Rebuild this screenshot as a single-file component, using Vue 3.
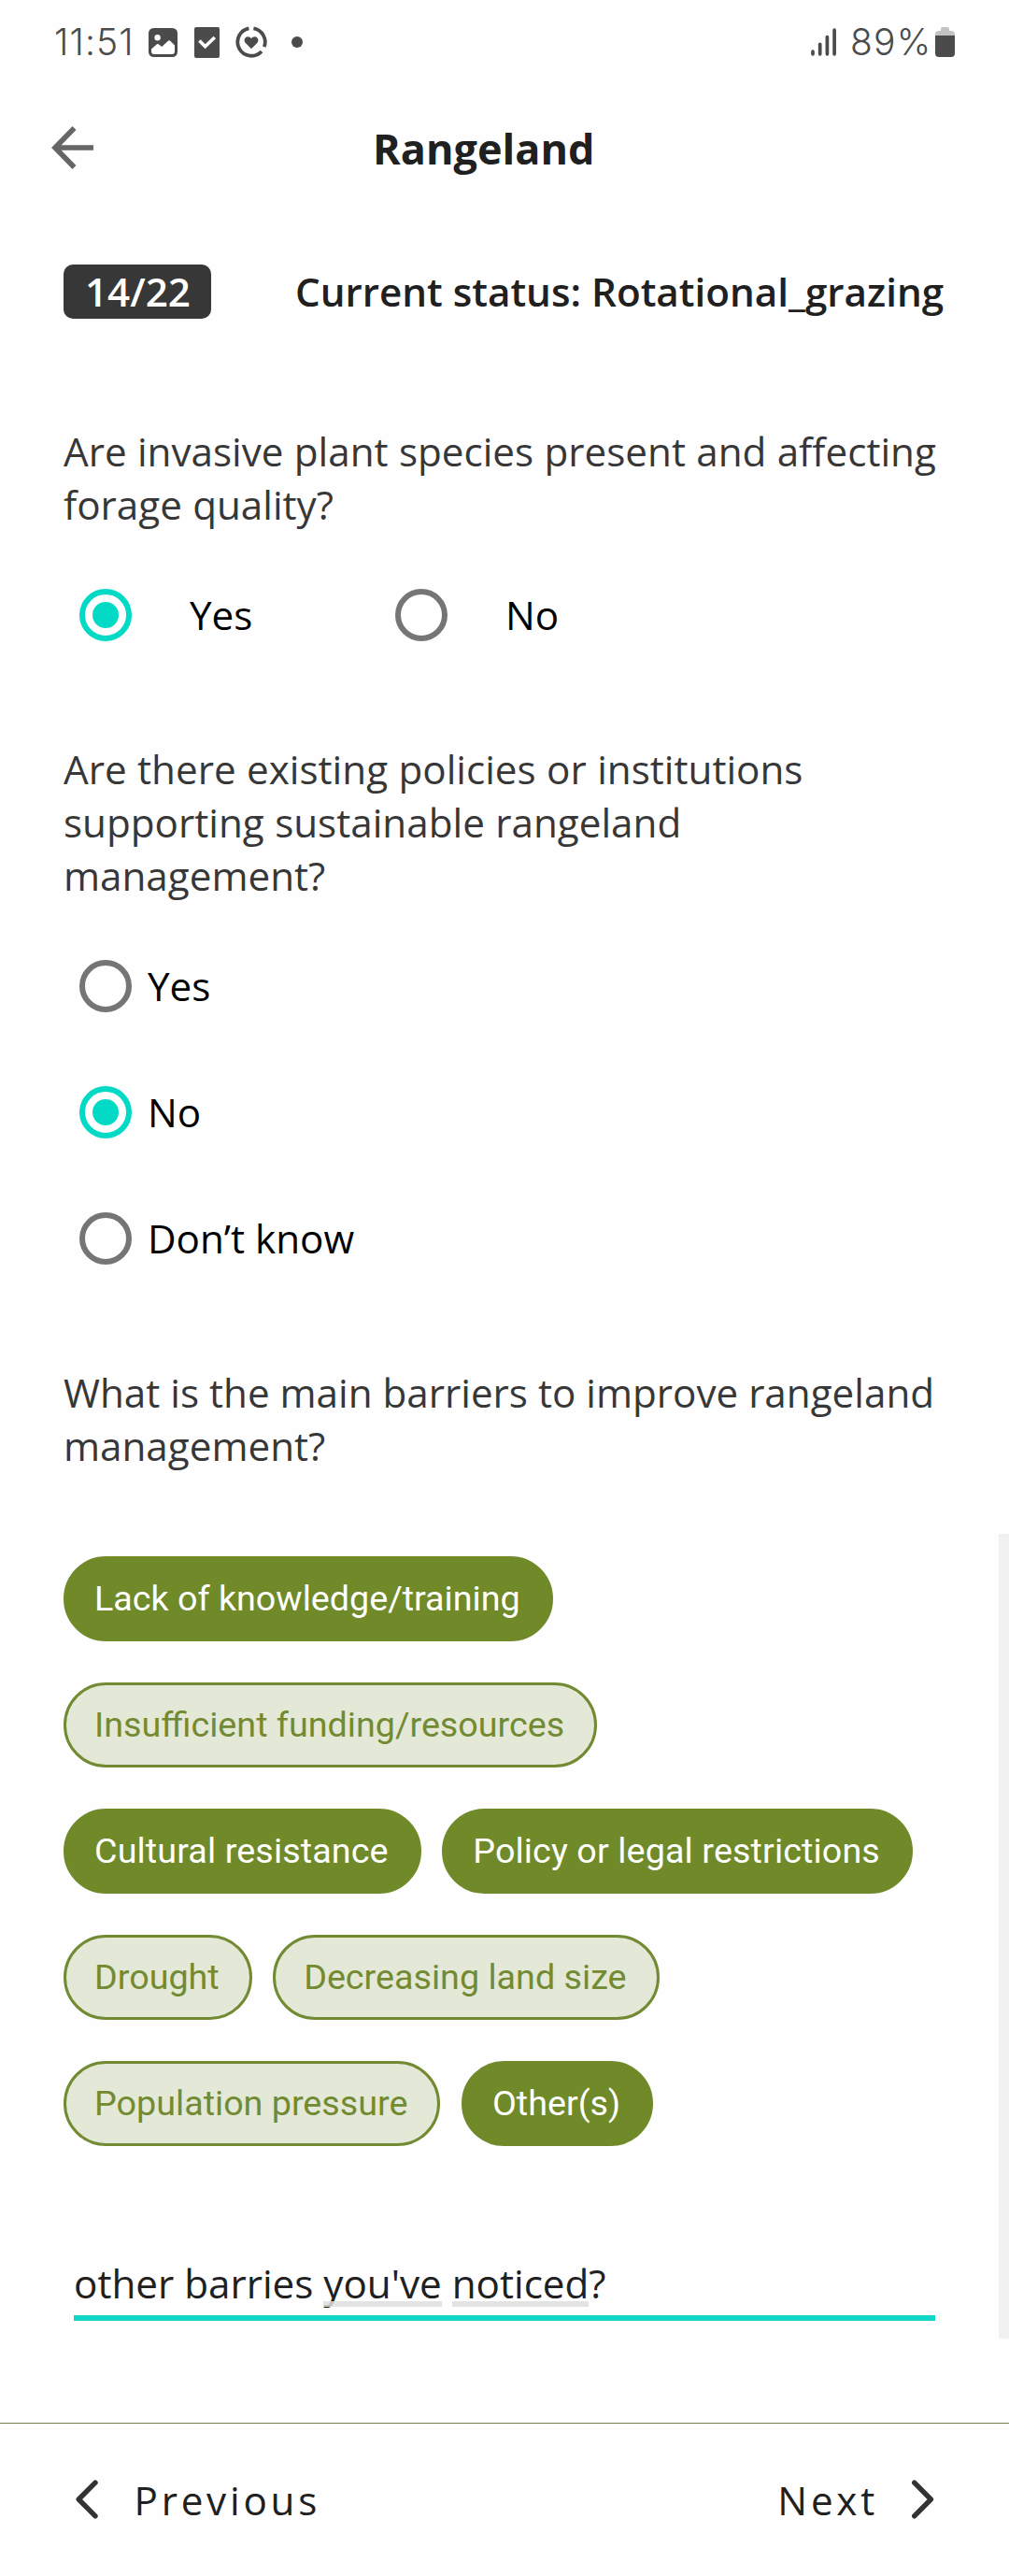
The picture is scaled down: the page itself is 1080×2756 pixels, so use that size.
<script setup>
import { ref } from 'vue'

const invasive = ref('Yes')
const policies = ref('No')
const policyOptions = ['Yes', 'No', 'Don’t know']

const barrierRows = ref([
  [{ label: 'Lack of knowledge/training', on: true }],
  [{ label: 'Insufficient funding/resources', on: false }],
  [
    { label: 'Cultural resistance', on: true, wide: true },
    { label: 'Policy or legal restrictions', on: true, wide: true },
  ],
  [
    { label: 'Drought', on: false },
    { label: 'Decreasing land size', on: false },
  ],
  [
    { label: 'Population pressure', on: false },
    { label: 'Other(s)', on: true },
  ],
])
</script>

<template>
  <div class="screen">
    <div class="status-bar">
      <span class="clock">11:51</span>
      <svg class="ic-image" width="31" height="31" viewBox="0 0 31 31">
        <rect width="31" height="31" rx="5.5" fill="#4b4b4b" />
        <circle cx="9.6" cy="10.2" r="3.2" fill="#fefefe" />
        <path d="M3 22.5 L9 17.2 Q10 16.6 11 17.4 L14.2 20 L21.2 13.6 Q22.2 12.8 23.2 13.8 L28 18.5 V25 Q28 28 25 28 H6 Q3 28 3 25 Z" fill="#fefefe" />
      </svg>
      <svg class="ic-task" width="27" height="33" viewBox="0 0 27 33">
        <rect width="27" height="33" rx="2" fill="#4b4b4b" />
        <path d="M5.4 14.6 L11.6 20.8 L21.8 11" fill="none" stroke="#fefefe" stroke-width="3.6" />
      </svg>
      <svg class="ic-heart" width="34" height="34" viewBox="0 0 34 34">
        <g fill="none" stroke="#4b4b4b" stroke-width="3.8">
          <path d="M14.4 2.4 A14.8 14.8 0 1 0 28 27" />
          <path d="M19.4 2.4 A14.8 14.8 0 0 1 30.8 22.2" />
        </g>
        <path d="M17 24.2 L10.8 17.9 C8.4 15.2 10 11.2 13.2 11.2 C15 11.2 16.3 12.1 17 13.3 C17.7 12.1 19 11.2 20.8 11.2 C24 11.2 25.6 15.2 23.2 17.9 Z" fill="#4b4b4b" />
      </svg>
      <i class="dot"></i>
      <svg class="ic-signal" width="28" height="30" viewBox="0 0 28 30">
        <g stroke="#4b4b4b" stroke-width="3.7" stroke-linecap="round">
          <path d="M2 25.2V27.8M9.7 17.3V27.8M17.4 9.5V27.8M25.1 2.2V27.8" />
        </g>
      </svg>
      <span class="percent">89%</span>
      <svg class="ic-battery" width="21" height="32" viewBox="0 0 21 32">
        <path d="M6 2 Q6 0 8 0 H13 Q15 0 15 2 V4 H18 Q21 4.5 21 8 V12 H0 V8 Q0 4.5 3 4 H6 Z" fill="#c3c3c3" />
        <path d="M0 9 H21 V28 Q21 32 17 32 H4 Q0 32 0 28 Z" fill="#4b4b4b" />
      </svg>
    </div>

    <header class="app-bar">
      <svg class="back" width="46" height="46" viewBox="0 0 46 46">
        <path d="M45 23 H5 M24.5 2 L4 23 L24.5 44" fill="none" stroke="#666" stroke-width="5.6" />
      </svg>
      <h1>Rangeland</h1>
    </header>

    <main class="content">
      <div class="progress">
        <span class="badge">14/22</span>
        <span class="current">Current status: Rotational_grazing</span>
      </div>

      <p class="question q1">Are invasive plant species present and affecting<br />forage quality?</p>
      <div class="inline-options">
        <label v-for="o in ['Yes', 'No']" :key="o" @click="invasive = o">
          <i class="radio" :class="{ on: invasive === o }"></i>
          <span>{{ o }}</span>
        </label>
      </div>

      <p class="question q2">Are there existing policies or institutions<br />supporting sustainable rangeland<br />management?</p>
      <div class="stacked-options">
        <label v-for="o in policyOptions" :key="o" @click="policies = o">
          <i class="radio" :class="{ on: policies === o }"></i>
          <span>{{ o }}</span>
        </label>
      </div>

      <p class="question q3">What is the main barriers to improve rangeland<br />management?</p>
      <div class="chips">
        <div v-for="(row, i) in barrierRows" :key="i" class="chip-row">
          <span v-for="c in row" :key="c.label" class="chip" :class="{ on: c.on, wide: c.wide }" @click="c.on = !c.on">{{ c.label }}</span>
        </div>
      </div>

      <div class="field">other barries <span class="mark">you've</span> <span class="mark">noticed</span>?</div>
      <div class="scrollbar"></div>
    </main>

    <footer class="nav">
      <span class="nav-item">
        <svg width="24" height="42" viewBox="0 0 24 42">
          <path d="M21 3.2 L3.2 21 L21 38.8" fill="none" stroke="#333" stroke-width="5.4" stroke-linecap="round" stroke-linejoin="round" />
        </svg>
        <span class="prev">Previous</span>
      </span>
      <span class="nav-item">
        <span class="next">Next</span>
        <svg width="24" height="42" viewBox="0 0 24 42">
          <path d="M2.7 3.2 L20.4 21 L2.7 38.8" fill="none" stroke="#333" stroke-width="5.4" stroke-linecap="round" stroke-linejoin="round" />
        </svg>
      </span>
    </footer>
  </div>
</template>

<style>
body {
  background: #fefefe;
}
</style>

<style scoped>
.screen {
  box-sizing: border-box;
  width: 1080px;
  height: 2756px;
  display: flex;
  flex-direction: column;
  background: #fefefe;
  font-family: "Open Sans", "Noto Sans", sans-serif;
  font-size: 42.19px;
  line-height: 57px;
  white-space: nowrap;
  color: #202020;
}

.status-bar {
  height: 90px;
  flex: none;
  display: flex;
  align-items: center;
  padding: 0 58px;
  box-sizing: border-box;
  color: #4b4b4b;
  font-family: Inter, Roboto, sans-serif;
  font-size: 39px;
  font-weight: 300;
  line-height: 90px;
}
.clock {
  width: 101px;
  letter-spacing: 1.1px;
}
.ic-image {
  margin-right: 18px;
}
.ic-task {
  margin-right: 17px;
}
.ic-heart {
  margin-right: 26px;
}
.dot {
  width: 12px;
  height: 12px;
  border-radius: 50%;
  background: #4b4b4b;
}
.ic-signal {
  margin-left: auto;
  margin-right: 14px;
}
.percent {
  width: 91px;
  letter-spacing: 1.2px;
}
.status-bar svg {
  flex: none;
}

.app-bar {
  height: 137px;
  flex: none;
  display: flex;
  align-items: center;
  padding-left: 55px;
}
.back {
  margin-top: -1px;
}
.app-bar h1 {
  margin: 0 0 0 298px;
  font-size: 45px;
  line-height: 61px;
  font-weight: 700;
}

.content {
  position: relative;
  flex: 1;
  min-height: 0;
  padding: 56px 67.5px 0 68px;
}
.progress {
  display: flex;
  height: 58px;
  font-weight: 600;
}
.badge {
  box-sizing: border-box;
  width: 158px;
  height: 58px;
  padding-left: 23px;
  border-radius: 10px;
  background: #373737;
  color: #fff;
}
.current {
  margin-left: 90px;
}

.question {
  margin: 0;
  color: #373737;
}
.q1 {
  margin-top: 113px;
  word-spacing: 0.35px;
}
.q2 {
  margin-top: 108px;
  word-spacing: 0.5px;
}
.q3 {
  margin-top: 69px;
}

label {
  display: flex;
  align-items: center;
  color: #000;
}
.radio {
  box-sizing: border-box;
  flex: none;
  width: 56px;
  height: 56px;
  border: 6px solid #757575;
  border-radius: 50%;
  display: flex;
  align-items: center;
  justify-content: center;
}
.radio.on {
  border-color: #03dac5;
}
.radio.on::after {
  content: "";
  width: 28px;
  height: 28px;
  border-radius: 50%;
  background: #03dac5;
}
.inline-options {
  display: flex;
  height: 56px;
  margin-top: 62px;
  padding-left: 17px;
}
.inline-options label {
  width: 338px;
  gap: 62px;
}
.inline-options span {
  margin-bottom: 2px;
}
.stacked-options {
  margin-top: 22px;
  padding-left: 17px;
}
.stacked-options label {
  height: 135px;
  gap: 17px;
}

.chips {
  display: flex;
  flex-direction: column;
  gap: 44px;
  margin-top: 90px;
}
.chip-row {
  display: flex;
  gap: 22.5px;
}
.chip {
  box-sizing: border-box;
  height: 91px;
  padding: 0 32px 0 30px;
  border: 3px solid #728b33;
  border-radius: 46px;
  background: #e4e8d7;
  color: #728b33;
  font-family: Roboto, sans-serif;
  font-size: 37.7px;
  line-height: 85px;
}
.chip.on {
  border-color: #708a29;
  background: #708a29;
  color: #fff;
}
.chip.wide {
  letter-spacing: 0.12px;
}

.field {
  margin: 118px 12px 0 11px;
  padding-bottom: 6px;
  border-bottom: 6px solid #11d5c5;
}
.mark {
  position: relative;
}
.mark::after {
  content: "";
  position: absolute;
  left: 0;
  right: 0;
  bottom: 3px;
  height: 6px;
  background: rgba(222, 222, 222, 0.85);
}

.scrollbar {
  position: absolute;
  right: 0;
  top: 1414px;
  width: 11px;
  height: 861px;
  background: #f1f1f1;
}

.nav {
  box-sizing: border-box;
  flex: none;
  height: 164px;
  display: flex;
  align-items: center;
  justify-content: space-between;
  padding: 0 80px 1px 81px;
  border-top: 1px solid #748347;
  letter-spacing: 3.77px;
}
.nav-item {
  display: flex;
  align-items: center;
}
.prev {
  margin-left: 38.5px;
}
.next {
  margin-right: 36px;
}
</style>
